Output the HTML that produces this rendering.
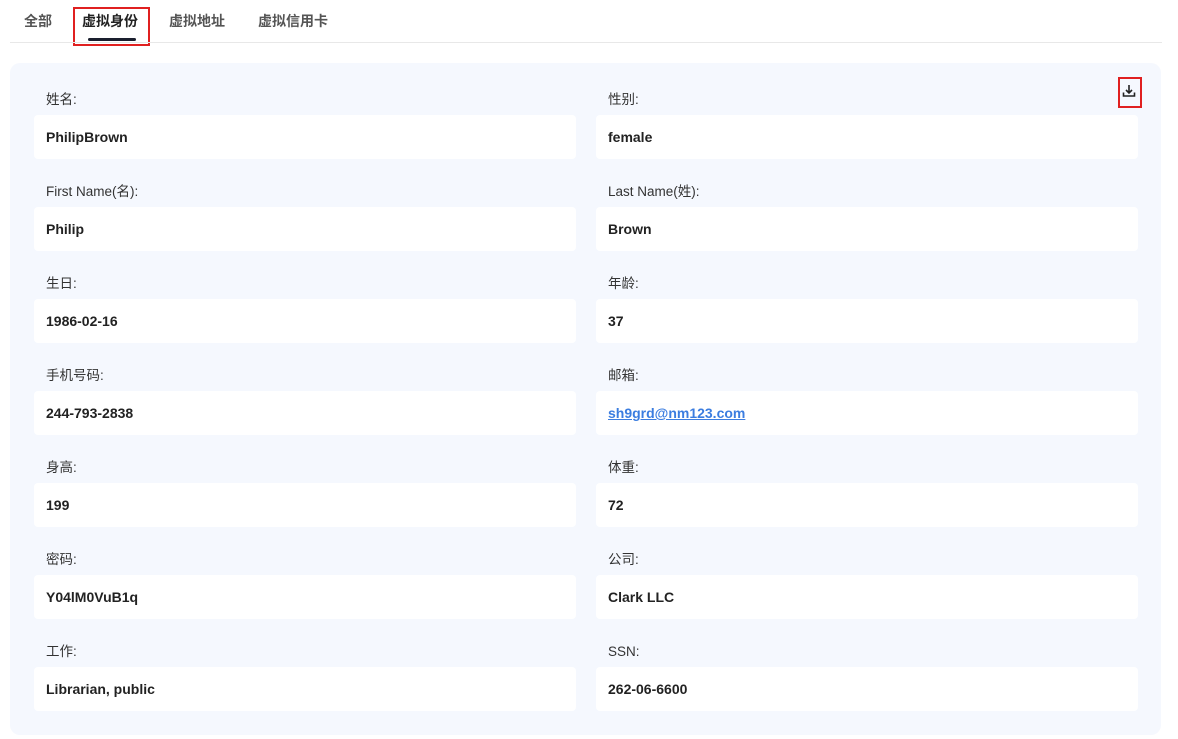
<!DOCTYPE html>
<html><head><meta charset="utf-8"><style>
body{margin:0;width:1178px;height:739px;background:#fff;font-family:"Liberation Sans","Noto Sans CJK SC",sans-serif;position:relative;overflow:hidden}
.tab{position:absolute;top:11px;font-size:14px;color:#555;font-weight:bold}
.line{position:absolute;left:10px;top:42px;width:1152px;height:1px;background:#e8e8e8}
.panel{position:absolute;left:10px;top:63px;width:1151px;height:672px;background:#f5f8fe;border-radius:10px}
.lab{position:absolute;font-size:13.5px;color:#333;line-height:18px}
.box{position:absolute;width:542px;height:44px;background:#fff;border-radius:4px;font-size:14px;font-weight:bold;color:#222;line-height:44px;box-sizing:border-box;padding-left:12px}
</style></head><body>
<div class="tab" style="left:24px">全部</div>
<div class="tab" style="left:82px;color:#222">虚拟身份</div>
<div class="tab" style="left:169px">虚拟地址</div>
<div class="tab" style="left:258px">虚拟信用卡</div>
<div style="position:absolute;left:88px;top:38px;width:48px;height:3px;background:#1a1f2e;border-radius:2px"></div>
<div style="position:absolute;left:73px;top:7px;width:73px;height:35px;border:2px solid #e02020"></div>
<div class="line"></div>
<div class="panel"></div>
<div style="position:absolute;left:1118px;top:77px;width:20px;height:27px;border:2px solid #e02020"></div>
<svg style="position:absolute;left:1122px;top:84px" width="14" height="14" viewBox="0 0 14 14" fill="none" stroke="#222" stroke-width="1.6"><path d="M7 1v8M4 6l3 3 3-3M1.5 8.5v3.5h11v-3.5"/></svg>
<div id="f"></div>
<script>
var d=[["姓名:","PhilipBrown","性别:","female"],["First Name(名):","Philip","Last Name(姓):","Brown"],["生日:","1986-02-16","年龄:","37"],["手机号码:","244-793-2838","邮箱:","sh9grd@nm123.com"],["身高:","199","体重:","72"],["密码:","Y04lM0VuB1q","公司:","Clark LLC"],["工作:","Librarian, public","SSN:","262-06-6600"]];
var h="";d.forEach(function(r,i){var y=i*92;
h+='<div class="lab" style="left:46px;top:'+(91+y)+'px">'+r[0]+'</div><div class="box" style="left:34px;top:'+(115+y)+'px">'+r[1]+'</div>';
var v=i==3?'<span style="color:#3b7de0;text-decoration:underline">'+r[3]+'</span>':r[3];
h+='<div class="lab" style="left:608px;top:'+(91+y)+'px">'+r[2]+'</div><div class="box" style="left:596px;top:'+(115+y)+'px">'+v+'</div>';});
document.getElementById("f").innerHTML=h;
</script>
</body></html>
